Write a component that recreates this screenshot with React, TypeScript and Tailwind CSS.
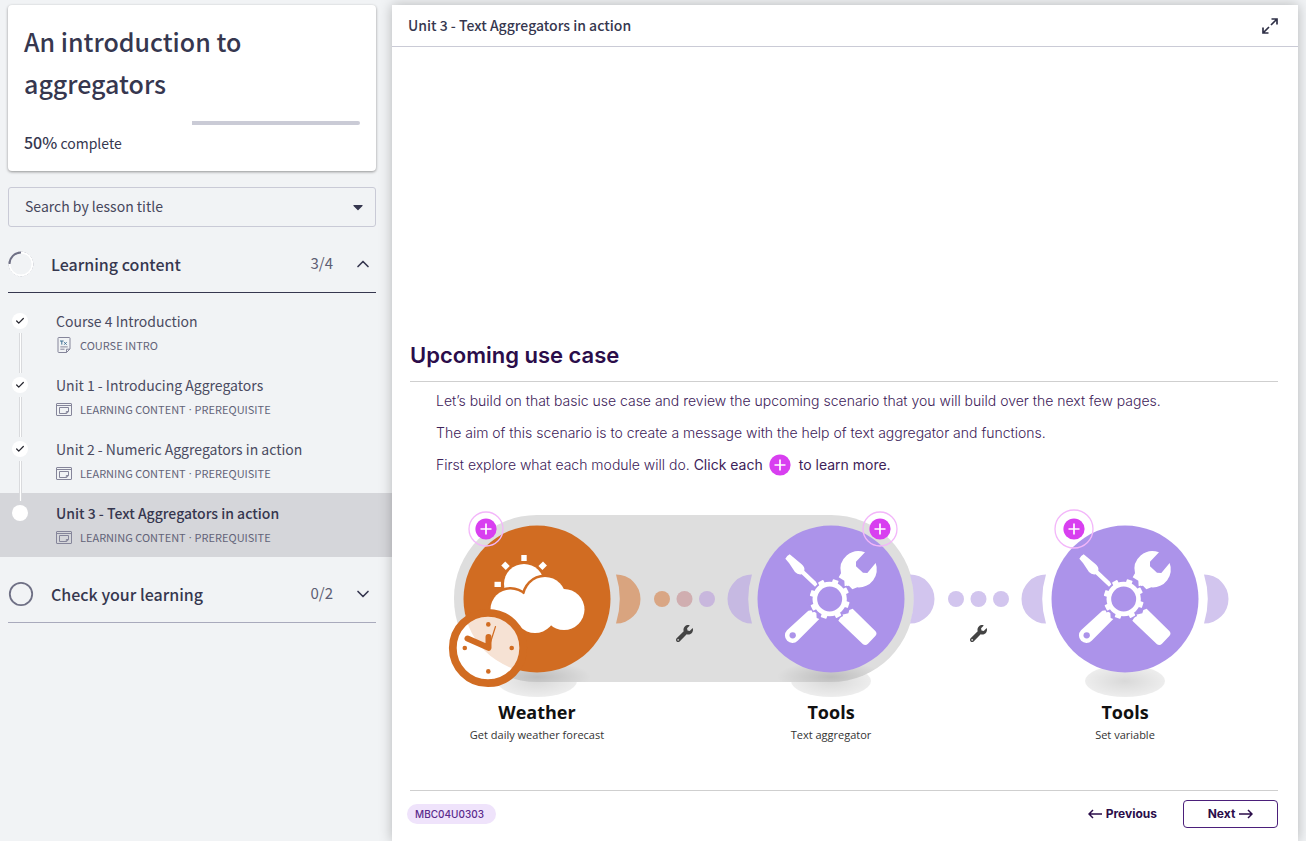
import React from "react";
import { FaCaretDown, FaWrench } from "react-icons/fa";
import { Check, ChevronDown, ChevronUp } from "lucide-react";

type Lesson = { title: string; tags: string[]; icon: "text" | "page"; done: boolean };

const lessons: Lesson[] = [
  { title: "Course 4 Introduction", tags: ["COURSE INTRO"], icon: "text", done: true },
  { title: "Unit 1 - Introducing Aggregators", tags: ["LEARNING CONTENT", "PREREQUISITE"], icon: "page", done: true },
  { title: "Unit 2 - Numeric Aggregators in action", tags: ["LEARNING CONTENT", "PREREQUISITE"], icon: "page", done: true },
  { title: "Unit 3 - Text Aggregators in action", tags: ["LEARNING CONTENT", "PREREQUISITE"], icon: "page", done: false },
];

function PageIcon() {
  return (
    <svg className="mr-2" width="16" height="16" viewBox="0 0 16 16" fill="none" stroke="#85859a" aria-hidden="true">
      <rect x="0.5" y="2.5" width="15" height="12" rx="0.5" />
      <path d="M0.5 4.5H15.5" />
      <path d="M3.5 6.5H12.5V10.5L10.8 12.5H3.5Z M10.3 12.2V10.5H12.5" />
    </svg>
  );
}

function TextIcon() {
  return (
    <svg className="mr-2" width="16" height="16" viewBox="0 0 16 16" fill="none" stroke="#85859a" aria-hidden="true">
      <path d="M2 1.2Q2 0.5 2.7 0.5H13.3Q14 0.5 14 1.2V12L10.5 15.5H2.7Q2 15.5 2 14.8Z" />
      <path d="M10.5 15.5V12.2H14" />
      <path d="M4 4H7.6M5.8 4V7.6M8.2 5.2L10.6 7.7M10.6 5.2L8.2 7.7" stroke="#3e6f93" />
      <path d="M4.3 9.9H11.7M4.3 12.2H8.5" />
    </svg>
  );
}

function LessonRow({ lesson, last }: { lesson: Lesson; last: boolean }) {
  return (
    <li className="relative">
      <a
        href="#lesson"
        aria-current={last ? "page" : undefined}
        className={last ? "flex gap-7 bg-[#d5d6da] py-2 pl-3" : "flex gap-7 py-2 pl-3"}
      >
        <span className="mt-1 flex size-4 shrink-0 items-center justify-center rounded-full bg-white text-[#26262f]">
          {lesson.done && <Check size={10} strokeWidth={3} />}
        </span>
        <span className="flex flex-col">
          <span
            className={
              last
                ? "text-[14px] leading-6 font-medium text-[#36374f]"
                : "text-[14px] leading-6 text-[#4a4b61]"
            }
          >
            {lesson.title}
          </span>
          <span className="flex h-6 items-center text-[11px] text-[#626378]">
            {lesson.icon === "text" ? <TextIcon /> : <PageIcon />}
            {lesson.tags.map((tag, i) => (
              <React.Fragment key={tag}>
                {i > 0 && <span className="px-[3px] font-['Open_Sans',sans-serif]">·</span>}
                <span>{tag}</span>
              </React.Fragment>
            ))}
          </span>
        </span>
      </a>
      {!last && (
        <span className="absolute top-8 left-[19px] z-10 h-10 w-[3px] border-x border-[#d9dadd] bg-white" />
      )}
    </li>
  );
}

function PlusDisc() {
  return (
    <svg width="22" height="22" viewBox="0 0 22 22" aria-hidden="true">
      <circle cx="11" cy="11" r="10.6" fill="#d83ff0" />
      <path d="M11 5.5V16.5M5.5 11H16.5" stroke="#fff" strokeWidth="1.7" />
    </svg>
  );
}

function ToolsArt() {
  const teeth = [18, 63, 108, 153, 198, 243, 288, 333];
  return (
    <g>
      <circle r="73.5" fill="#ac93ea" />
      <g transform="scale(0.3333) translate(-166 -162)">
        <g fill="#fff">
          <path d="M29 41Q34 32 42 28L52 36L78 58Q88 66 86 77L127 116L118 125L78 88Q66 90 58 81L40 54Z" />
          <path d="M268 22A54 54 0 0 0 196 85L189 97L206 107L207 124L220 122L230 133L245 127A54 54 0 0 0 300 54L275 84L262 83L241 64V50Z" />
          <path d="M98 197L108 196L122 204L123 219L131 222L66 287A22 22 0 0 1 34 256Z" />
          <path d="M188 227L199 209L218 205L221 195L231 191L299 258Q306 266 299 273L277 296Q270 303 262 298Z" />
        </g>
        <circle cx="51" cy="271" r="9.5" fill="#ac93ea" />
        <g transform="translate(162 162)">
          {teeth.map((a) => (
            <rect key={`gap-${a}`} x="-13" y="-64" width="26" height="24" fill="#ac93ea" transform={`rotate(${a})`} />
          ))}
          <circle r="55" fill="#ac93ea" />
          {teeth.map((a) => (
            <rect key={a} x="-9" y="-60" width="18" height="20" rx="2" fill="#fff" transform={`rotate(${a})`} />
          ))}
          <circle r="44.5" fill="none" stroke="#fff" strokeWidth="14" />
        </g>
      </g>
    </g>
  );
}

const crescent = "M79 -24.5A24.5 24.5 0 0 1 79 24.5A83 83 0 0 0 79 -24.5Z";

function Scenario() {
  return (
    <svg className="block" width="868" height="250" viewBox="0 0 868 250" role="img" aria-label="Scenario diagram">
      <defs>
        <radialGradient id="shade">
          <stop offset="0" stopColor="#000" stopOpacity="0.15" />
          <stop offset="1" stopColor="#000" stopOpacity="0.07" />
        </radialGradient>
        <radialGradient id="halo">
          <stop offset="0" stopColor="#000" stopOpacity="0.15" />
          <stop offset="1" stopColor="#000" stopOpacity="0" />
        </radialGradient>
        <clipPath id="dial">
          <circle cx="78" cy="148" r="31.5" />
        </clipPath>
        <clipPath id="inside">
          <rect x="44" y="15" width="460" height="167" rx="83" />
        </clipPath>
      </defs>
      <ellipse cx="127" cy="181" rx="40" ry="16" fill="url(#shade)" />
      <ellipse cx="421" cy="181" rx="40" ry="16" fill="url(#shade)" />
      <ellipse cx="715" cy="181" rx="40" ry="16" fill="url(#shade)" />
      <rect x="44" y="15" width="460" height="167" rx="83" fill="#dedede" />
      <g clipPath="url(#inside)">
        <ellipse cx="127" cy="177" rx="54" ry="16" fill="url(#halo)" />
        <ellipse cx="421" cy="177" rx="54" ry="16" fill="url(#halo)" />
      </g>

      <g transform="translate(127 99)">
        <path d={crescent} fill="#d9a47f" />
        <circle r="73.5" fill="#d16c22" />
      </g>
      <g fill="#fff">
        <circle cx="114" cy="84" r="20" />
        <rect x="111.3" y="55" width="5.4" height="6" />
        <rect x="-2.8" y="-3.2" width="5.6" height="6.4" transform="translate(95.5 65.8) rotate(-45)" />
        <rect x="-2.8" y="-3.2" width="5.6" height="6.4" transform="translate(132.7 65.8) rotate(45)" />
        <rect x="84.5" y="81.8" width="6.4" height="5.2" />
      </g>
      <g stroke="#d16c22" strokeWidth="5" fill="#fff">
        <circle cx="100.5" cy="109.5" r="20" />
        <circle cx="135" cy="98" r="21" />
      </g>
      <g fill="#fff">
        <circle cx="100.5" cy="109.5" r="20" />
        <circle cx="135" cy="98" r="21" />
        <circle cx="154" cy="109.5" r="20.5" />
        <circle cx="125" cy="112" r="21" />
      </g>

      <circle cx="78" cy="148" r="35" fill="#fff" />
      <circle cx="127" cy="99" r="73.5" fill="#f6e2d4" clipPath="url(#dial)" />
      <circle cx="78" cy="148" r="35.2" fill="none" stroke="#d16c22" strokeWidth="7.8" />
      <g stroke="#d16c22" fill="none" strokeLinecap="round" strokeLinejoin="round">
        <path d="M57.5 138.5L78.5 147.8V137" strokeWidth="6" />
        <path d="M79 147L85.5 126.5" strokeWidth="1.2" />
      </g>
      <g fill="#d16c22">
        <circle cx="78.3" cy="124.4" r="2.3" />
        <circle cx="54.8" cy="148" r="2.3" />
        <circle cx="101.7" cy="148" r="2.3" />
        <circle cx="78.3" cy="171.4" r="2.3" />
      </g>

      <circle cx="252" cy="99" r="8" fill="#d9a684" />
      <circle cx="274.5" cy="99" r="8" fill="#d0aeb0" />
      <circle cx="297" cy="99" r="8" fill="#c8b7dd" />

      <g transform="translate(421 99)">
        <path d={crescent} fill="#d2c5ee" />
        <path d={crescent} fill="#c6b9e2" transform="scale(-1 1)" />
        <ToolsArt />
      </g>
      <g fill="#d2c5ee">
        <circle cx="546" cy="99" r="8" />
        <circle cx="568.5" cy="99" r="8" />
        <circle cx="591" cy="99" r="8" />
      </g>
      <g transform="translate(715 99)">
        <path d={crescent} fill="#d2c5ee" />
        <path d={crescent} fill="#d2c5ee" transform="scale(-1 1)" />
        <ToolsArt />
      </g>
      <FaWrench x="266" y="125" size={17} color="#444" />
      <FaWrench x="560" y="125" size={17} color="#444" />

      <g fill="none" stroke="#f3b6fa" strokeWidth="1.3">
        <circle cx="76" cy="29" r="17" />
        <circle cx="470" cy="29" r="17" />
        <circle cx="664" cy="29" r="19" />
      </g>
    </svg>
  );
}

function NodeLabel({ title, sub, place }: { title: string; sub: string; place: string }) {
  return (
    <div className={`absolute top-[200px] w-40 text-center font-['Open_Sans','Noto_Sans',sans-serif] ${place}`}>
      <div className="text-[18px] leading-6 font-bold text-[#111]">{title}</div>
      <div className="text-[11px] leading-[22px] text-[#333]">{sub}</div>
    </div>
  );
}

export default function App() {
  return (
    <div className="flex min-h-screen bg-[#f1f3f5] font-['Noto_Sans_CJK_SC',sans-serif] text-[#36374f]">
      <aside className="w-[392px] shrink-0 pt-[5px]">
        <section className="mr-4 ml-2 rounded bg-white px-4 pt-[15px] pb-[14px] shadow-[0_1px_3px_rgba(0,0,0,0.4)]">
          <h1 className="text-[25px] leading-[42px] font-medium">An introduction to aggregators</h1>
          <div
            role="progressbar"
            aria-label="Course progress"
            aria-valuenow={50}
            className="mt-[17px] flex h-1 justify-end overflow-hidden rounded-sm"
          >
            <div className="w-1/2 bg-[#cacbd6]" />
          </div>
          <p className="mt-[3px] text-[14px] leading-7">
            <span className="text-[16px] leading-7 font-medium">50%</span> complete
          </p>
        </section>

        <div className="relative mt-4 mr-4 ml-2">
          <select
            aria-label="Search by lesson title"
            className="block h-10 w-full appearance-none rounded-[3px] border border-[#c9cad6] bg-transparent px-4 pb-0.5 text-[14px] text-[#46475c]"
          >
            <option>Search by lesson title</option>
          </select>
          <FaCaretDown size={16} className="pointer-events-none absolute top-3 right-2.5 text-[#36374f]" />
        </div>

        <button className="mx-2 mt-3 flex h-[54px] w-[368px] items-center border-b border-[#36374f] pb-1 text-left">
          <svg width="26" height="26" viewBox="0 0 26 26" fill="none" aria-hidden="true">
            <circle cx="13" cy="13" r="12" stroke="#b9bac4" strokeWidth="1" strokeDasharray="2 1.5" />
            <circle cx="13" cy="13" r="11.4" stroke="#fff" strokeWidth="1.6" />
            <path d="M1.5 13A11.5 11.5 0 0 1 13 1.5" stroke="#6f7085" strokeWidth="2" />
          </svg>
          <span className="ml-[17px] flex-1 text-[16px] font-medium">Learning content</span>
          <span className="text-[15px] text-[#5d5e73]">3/4</span>
          <ChevronUp size={20} className="mr-[3px] ml-5" />
        </button>

        <ul className="pt-2">
          {lessons.map((l, i) => (
            <LessonRow key={l.title} lesson={l} last={i === lessons.length - 1} />
          ))}
        </ul>

        <button className="mx-2 mt-3 flex h-[54px] w-[368px] items-center border-b border-[#a9aabc] pb-1 text-left">
          <svg width="26" height="26" viewBox="0 0 26 26" fill="none" aria-hidden="true">
            <circle cx="13" cy="13" r="11.2" stroke="#6f7085" strokeWidth="1.8" />
          </svg>
          <span className="ml-[17px] flex-1 text-[16px] font-medium">Check your learning</span>
          <span className="text-[15px] text-[#5d5e73]">0/2</span>
          <ChevronDown size={20} className="mr-[3px] ml-5" />
        </button>
      </aside>

      <main className="relative z-20 mt-[5px] mr-2 flex min-w-0 flex-1 flex-col bg-white shadow-[0_0_12px_rgba(0,0,0,0.25)]">
        <header className="flex h-[42px] items-center justify-between border-b border-[#cacbd6] px-4">
          <h2 className="text-[14px] font-medium">Unit 3 - Text Aggregators in action</h2>
          <button aria-label="Full screen" className="mr-1">
            <svg width="16" height="16" viewBox="0 0 16 16" fill="none" stroke="#2f3047" strokeWidth="1.7" aria-hidden="true">
              <path d="M9.5 1H15V6.5M15 1L9 7M6.5 15H1V9.5M1 15L7 9" />
            </svg>
          </button>
        </header>

        <div className="flex flex-1 flex-col justify-end pr-5 pl-[18px] font-['Inter',sans-serif] text-[#2b0d4a]">
          <h3 className="border-b border-[#cfcfcf] pb-2.5 text-[22px] leading-8 font-semibold">Upcoming use case</h3>
          <div className="pt-2 pl-[26px] text-[14px] leading-[22px] font-light text-[#3d2259]">
            <p>Let’s build on that basic use case and review the upcoming scenario that you will build over the next few pages.</p>
            <p className="mt-2.5">The aim of this scenario is to create a message with the help of text aggregator and functions.</p>
            <p className="mt-2.5 flex items-center">
              <span>
                First explore what each module will do. <span className="font-normal">Click each</span>
              </span>
              <span className="mr-2 ml-1.5">
                <PlusDisc />
              </span>
              <span className="font-normal">to learn more.</span>
            </p>
          </div>

          <div className="relative mt-6 h-[290px] w-[868px]">
            <Scenario />
            <button aria-label="About Weather" className="absolute top-[18px] left-[65px]">
              <PlusDisc />
            </button>
            <button aria-label="About Text aggregator" className="absolute top-[18px] left-[459px]">
              <PlusDisc />
            </button>
            <button aria-label="About Set variable" className="absolute top-[18px] left-[653px]">
              <PlusDisc />
            </button>
            <NodeLabel title="Weather" sub="Get daily weather forecast" place="left-[47px]" />
            <NodeLabel title="Tools" sub="Text aggregator" place="left-[341px]" />
            <NodeLabel title="Tools" sub="Set variable" place="left-[635px]" />
          </div>

          <footer className="flex h-[51px] items-center justify-between border-t border-[#cfcfcf] pb-1">
            <span className="-ml-[3px] rounded-full bg-[#efe3fb] pr-3 pl-2 text-[10px] leading-5 font-medium text-[#5b2a8c]">
              MBC04U0303
            </span>
            <div className="flex items-center gap-[26px] text-[12px] font-bold">
              <button className="flex items-center gap-1">
                <svg width="14" height="10" viewBox="0 0 14 10" fill="none" stroke="currentColor" strokeWidth="1.5" aria-hidden="true">
                  <path d="M14 5H1.2M5 1L1 5L5 9" />
                </svg>
                Previous
              </button>
              <button className="flex h-7 w-[95px] items-center justify-center gap-1 rounded border border-[#4b1f7a]">
                Next
                <svg width="14" height="10" viewBox="0 0 14 10" fill="none" stroke="currentColor" strokeWidth="1.5" aria-hidden="true">
                  <path d="M0 5H12.8M9 1L13 5L9 9" />
                </svg>
              </button>
            </div>
          </footer>
        </div>
      </main>
    </div>
  );
}
